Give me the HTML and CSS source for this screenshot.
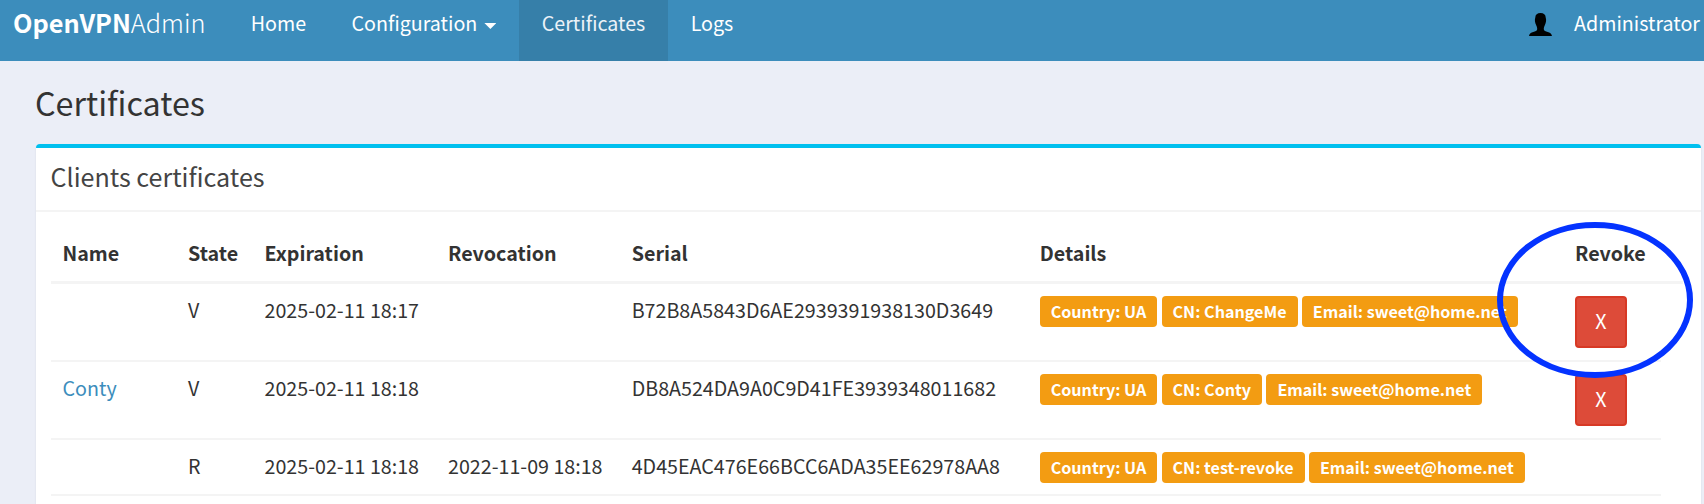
FILE: index.html
```html
<!DOCTYPE html>
<html lang="en"><head><meta charset="utf-8"><title>OpenVPN Admin</title><link rel="stylesheet" href="styles.css"></head>
<body>
<header class="navbar">
  <a class="brand"><b>OpenVPN</b><span class="brand-light">Admin</span></a>
  <nav class="nav">
    <a class="nav-item">Home</a>
    <a class="nav-item">Configuration<i class="caret"></i></a>
    <a class="nav-item active">Certificates</a>
    <a class="nav-item">Logs</a>
  </nav>
  <div class="user">
    <svg class="user-icon" viewBox="0 0 23 23" width="23" height="23"><path d="M11.5 0C14.7 0 16.7 1.5 16.7 4.5C17.6 7 17 10 15.7 12.5C15 14 14.8 15 14.8 16.3C14.8 19.3 22.6 18.2 23 23H0C.4 18.2 8.2 19.3 8.2 16.3C8.2 15 8 14 7.3 12.5C6 10 5.4 7 6.3 4.5C6.3 1.5 8.3 0 11.5 0Z"/></svg>
    <span>Administrator</span>
  </div>
</header>
<main class="content">
  <h1 class="page-title">Certificates</h1>
  <section class="box">
    <h3 class="box-title">Clients certificates</h3>
    <div class="table">
      <div class="row head"><span>Name</span><span>State</span><span>Expiration</span><span>Revocation</span><span>Serial</span><span>Details</span><span>Revoke</span></div>
      <div class="row tall"><span></span><span>V</span><span>2025-02-11 18:17</span><span></span><span>B72B8A5843D6AE2939391938130D3649</span><span class="labels"><b class="label">Country: UA</b><b class="label">CN: ChangeMe</b><b class="label">Email: sweet@home.net</b></span><span><button class="revoke">X</button></span></div>
      <div class="row tall"><span><a class="link">Conty</a></span><span>V</span><span>2025-02-11 18:18</span><span></span><span>DB8A524DA9A0C9D41FE3939348011682</span><span class="labels"><b class="label">Country: UA</b><b class="label">CN: Conty</b><b class="label">Email: sweet@home.net</b></span><span><button class="revoke">X</button></span></div>
      <div class="row"><span></span><span>R</span><span>2025-02-11 18:18</span><span>2022-11-09 18:18</span><span>4D45EAC476E66BCC6ADA35EE62978AA8</span><span class="labels"><b class="label">Country: UA</b><b class="label">CN: test-revoke</b><b class="label">Email: sweet@home.net</b></span><span></span></div>
    </div>
  </section>
</main>
<svg class="highlight" width="196" height="156" viewBox="0 0 196 156"><ellipse cx="98" cy="78" rx="95" ry="75" fill="none" stroke="#0433ff" stroke-width="6"/></svg>
</body></html>
```
FILE: styles.css
```css
* { box-sizing: border-box; }
body { margin: 0; height: 504px; overflow: hidden; position: relative; background: #ebeef7; color: #333; font: 19.68px/28px "Noto Sans CJK SC", "Noto Sans", sans-serif; }
.navbar { display: flex; height: 61px; background: #3c8dbc; color: #fff; padding-left: 13px; }
.brand { width: 215px; font-size: 25.3px; line-height: 45px; white-space: nowrap; }
.brand-light { font-weight: 300; }
.nav { display: flex; }
.nav-item { display: flex; padding: 9px 22.7px 0; }
.active { background: #367fa9; color: #ecf2f8; }
.caret { margin: 14px 0 0 7px; width: 12px; height: 6px; background: #fff; clip-path: polygon(0 0, 100% 0, 50% 100%); }
.user { display: flex; margin-left: auto; padding: 9px 4px 0 0; gap: 22px; }
.user-icon { margin-top: 4px; }
.content { padding: 0 3px 0 36px; }
.page-title { margin: 0 0 0 -1px; height: 83px; padding-top: 21px; font-size: 32.3px; line-height: 40px; font-weight: 400; }
.box { height: 380px; background: #fff; border-top: 4px solid #00c0ef; border-radius: 4px 4px 0 0; box-shadow: 0 1px 2px rgba(0,0,0,.1); }
.box-title { margin: 0; height: 64px; padding: 12px 14.5px 0; border-bottom: 2px solid #f4f4f4; font-size: 25.1px; line-height: 32px; font-weight: 400; color: #444; }
.table { width: 1610px; margin: 15px 0 0 15px; }
.row { display: grid; grid-template-columns: 125.5px 76.5px 183.5px 183.7px 408px 535.3px 1fr; height: 56px; padding: 12px 0 0 11.5px; border-bottom: 2px solid #f4f4f4; white-space: nowrap; }
.head { width: 1632px; height: 57px; border-bottom-width: 3px; font-weight: 700; }
.tall { height: 78px; }
.labels { display: flex; gap: 4.3px; align-items: flex-start; }
.label { height: 31px; padding: 0 11px; border-radius: 4px; background: #f39c12; color: #fff; font-size: 16.12px; line-height: 30px; }
.revoke { display: block; width: 52px; height: 52px; padding: 0 0 2px; border: 2px solid #d73925; border-radius: 4px; background: #dd4b39; color: #fff; font: inherit; }
.link { color: #3c8dbc; }
.highlight { position: absolute; left: 1497px; top: 222px; }
```
